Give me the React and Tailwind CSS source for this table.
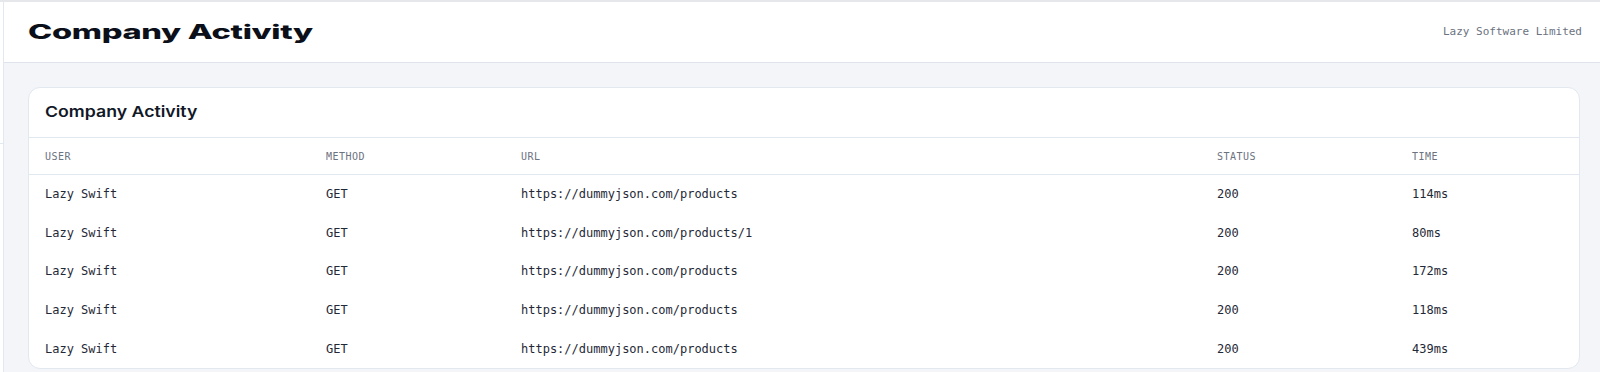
import React from 'react';

const rows = [
  { user: 'Lazy Swift', method: 'GET', url: 'https://dummyjson.com/products', status: '200', time: '114ms' },
  { user: 'Lazy Swift', method: 'GET', url: 'https://dummyjson.com/products/1', status: '200', time: '80ms' },
  { user: 'Lazy Swift', method: 'GET', url: 'https://dummyjson.com/products', status: '200', time: '172ms' },
  { user: 'Lazy Swift', method: 'GET', url: 'https://dummyjson.com/products', status: '200', time: '118ms' },
  { user: 'Lazy Swift', method: 'GET', url: 'https://dummyjson.com/products', status: '200', time: '439ms' },
];

const cols = 'grid grid-cols-[281px_195px_696px_195px_1fr] px-4';

function App() {
  return (
    <div className="flex h-[372px] w-full overflow-hidden border-t-2 border-[#e5e7eb] bg-[#f3f5f8] font-['DejaVu_Sans_Mono',monospace]">
      {/* sidebar edge */}
      <div className="relative w-[4px] shrink-0 border-r border-[#e2e8f0] bg-white">
        <div className="absolute left-0 top-[141px] h-px w-[3px] bg-[#e2e8f0]" />
      </div>

      <div className="flex min-w-0 flex-1 flex-col">
        {/* header */}
        <header className="flex h-[61px] shrink-0 items-center justify-between border-b border-[#dfe4ec] bg-white pl-6 pr-[18px]">
          <h1 className="origin-left scale-x-[1.63] font-['Inter',sans-serif] text-[20px] font-extrabold tracking-[-0.2px] text-[#0b0f19]">
            Company Activity
          </h1>
          <span className="text-[11px] text-[#6b7280]">Lazy Software Limited</span>
        </header>

        {/* main */}
        <main className="flex-1 pl-6 pr-5 pt-6">
          <div className="rounded-xl border border-[#e2e8f0] bg-white">
            <div className="flex h-[49px] items-center px-4">
              <h2 className="origin-left scale-x-[1.18] font-['Inter',sans-serif] text-[15px] font-semibold text-[#111827]">
                Company Activity
              </h2>
            </div>

            <div className={`${cols} h-[38px] items-center border-y border-[#e2e8f0] text-[10px] tracking-[0.5px] text-[#6b7280]`}>
              <span>USER</span>
              <span>METHOD</span>
              <span>URL</span>
              <span>STATUS</span>
              <span>TIME</span>
            </div>

            {rows.map((r, i) => (
              <div key={i} className={`${cols} h-[38.6px] items-center text-[12px] text-[#1f2937]`}>
                <span>{r.user}</span>
                <span>{r.method}</span>
                <span>{r.url}</span>
                <span>{r.status}</span>
                <span>{r.time}</span>
              </div>
            ))}
          </div>
        </main>
      </div>
    </div>
  );
}

export default App;
